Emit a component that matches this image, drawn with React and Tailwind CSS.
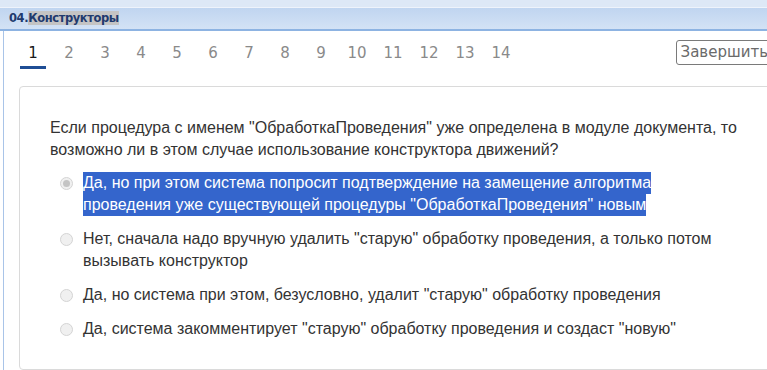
import { useState } from 'react';

const tabs = [1, 2, 3, 4, 5, 6, 7, 8, 9, 10, 11, 12, 13, 14];

const answers = [
  ['Да, но при этом система попросит подтверждение на замещение алгоритма', 'проведения уже существующей процедуры "ОбработкаПроведения" новым'],
  ['Нет, сначала надо вручную удалить "старую" обработку проведения, а только потом', 'вызывать конструктор'],
  ['Да, но система при этом, безусловно, удалит "старую" обработку проведения'],
  ['Да, система закомментирует "старую" обработку проведения и создаст "новую"'],
];

function Radio({ checked }) {
  return (
    <span className="mt-[5px] flex h-[13px] w-[13px] shrink-0 items-center justify-center rounded-full border border-[#d4d4d4] bg-[#f0f0f0]">
      {checked && <span className="h-[7px] w-[7px] rounded-full bg-[#c4c4c4]" />}
    </span>
  );
}

export default function App() {
  const [active] = useState(1);
  const [picked] = useState(0);

  return (
    <div className="h-[370px] w-[767px] overflow-hidden bg-white font-['Liberation_Sans',Arial,sans-serif]">
      <div className="h-[7px] bg-[#dde8f6]" />
      <div className="flex h-[24px] items-center border-t border-[#eef3fb] border-b-2 border-b-[#8db3e2] bg-gradient-to-b from-[#c0d5f0] to-[#d3e2f5] pl-[9px]">
        <span className="text-[11.5px] font-bold text-[#1f3a6e] font-['DejaVu_Sans',Tahoma,sans-serif] tracking-[-0.4px]">
          04.<span className="bg-[#c4c4c4]">Конструкторы</span>
        </span>
      </div>

      <div className="ml-[3px] border-l border-[#a9c4e8] h-full">
        <div className="flex items-start pt-[11px] pl-[11px]">
          <div className="flex">
            {tabs.map((n) => (
              <div key={n} className="flex w-9 flex-col items-center">
                <span
                  className={`text-[15px] leading-[22px] font-['DejaVu_Sans',Tahoma,sans-serif] ${
                    n === active ? 'text-[#1a1a1a]' : 'text-[#8a8a8a]'
                  }`}
                >
                  {n}
                </span>
                <span className={`mt-[2px] h-[3px] w-[26px] ${n === active ? 'bg-[#1f4e95]' : ''}`} />
              </div>
            ))}
          </div>
          <button className="ml-auto -mr-[6px] mt-[-2px] h-[25px] rounded-[3px] border border-[#7a7a7a] px-[4px] text-[15px] text-[#6a6a6a] font-['DejaVu_Sans',Tahoma,sans-serif]">
            Завершить
          </button>
        </div>

        <div className="ml-[15px] mt-[17px] -mr-[10px] h-[284px] rounded-[4px] border border-[#dadada] pl-[30px] pt-[30px] text-[16px] leading-[22px] text-[#333]">
          <p>
            Если процедура с именем "ОбработкаПроведения" уже определена в модуле документа, то
            <br />
            возможно ли в этом случае использование конструктора движений?
          </p>
          <div className="mt-[11px] flex flex-col gap-[12px] pl-[10px]">
            {answers.map((lines, i) => (
              <label key={i} className="flex gap-[10px]">
                <Radio checked={i === picked} />
                <span>
                  {lines.map((l, j) => (
                    <span key={j} className="block">
                      {i === picked ? (
                        <span className="inline-block bg-[#3465cc] text-white">{l}</span>
                      ) : (
                        l
                      )}
                    </span>
                  ))}
                </span>
              </label>
            ))}
          </div>
        </div>
      </div>
    </div>
  );
}
